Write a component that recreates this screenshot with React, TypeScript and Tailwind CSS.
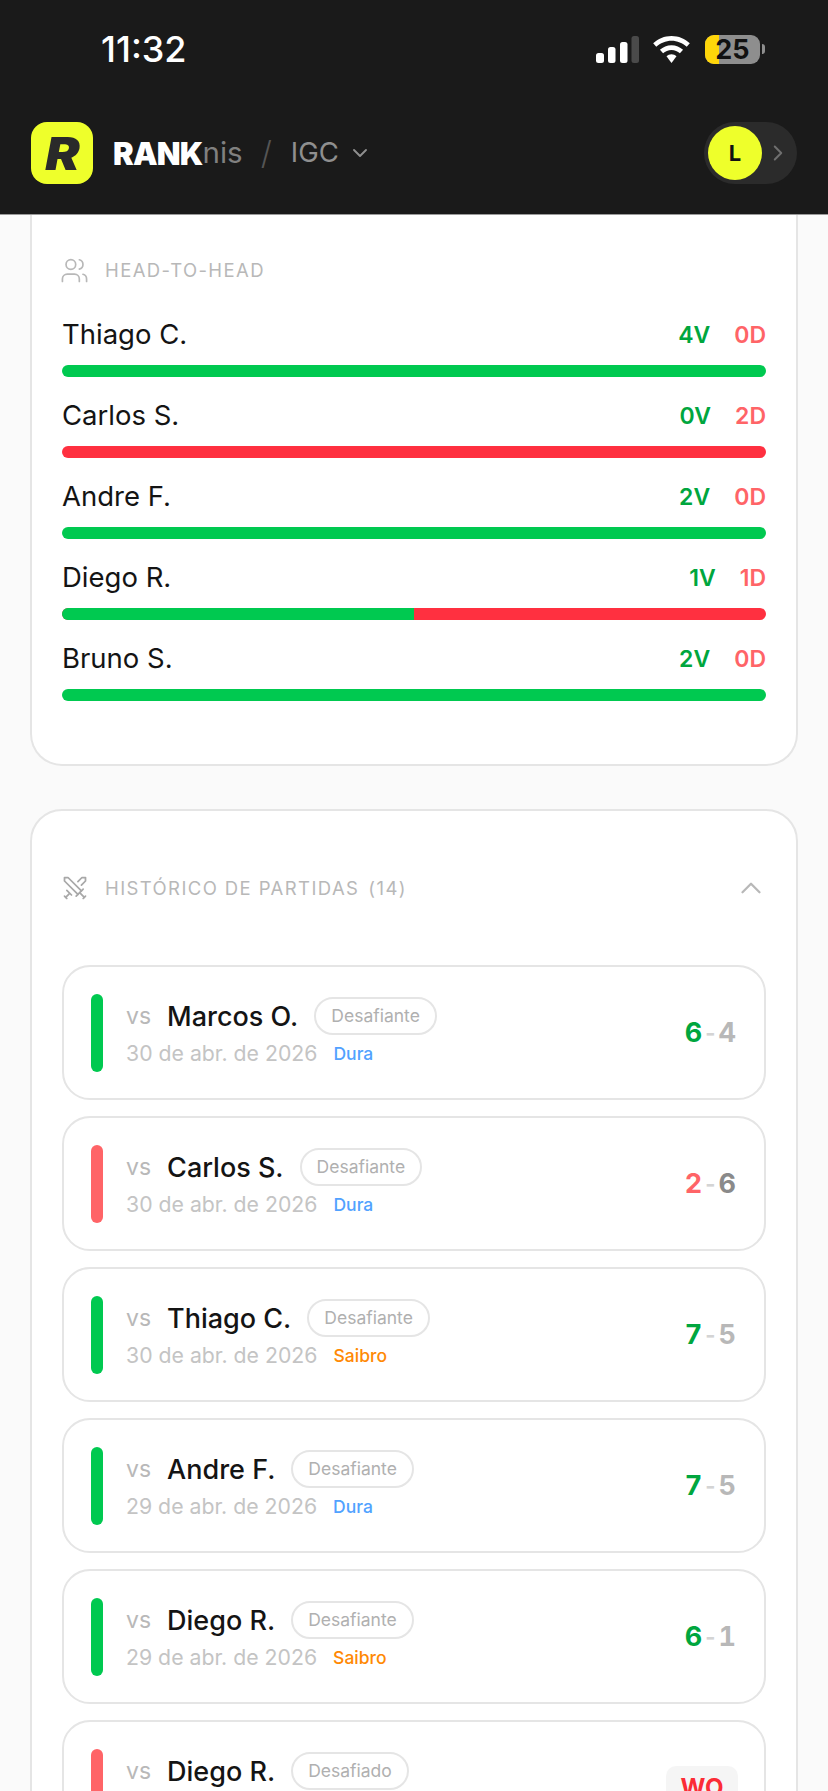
import React from 'react';
import { ChevronDown, ChevronRight, ChevronUp, Swords, Users } from 'lucide-react';

const headToHead = [
  { name: 'Thiago C.', wins: 4, losses: 0 },
  { name: 'Carlos S.', wins: 0, losses: 2 },
  { name: 'Andre F.', wins: 2, losses: 0 },
  { name: 'Diego R.', wins: 1, losses: 1 },
  { name: 'Bruno S.', wins: 2, losses: 0 },
];

type Match = {
  name: string;
  role: string;
  date: string;
  surface: 'Dura' | 'Saibro';
  won: boolean;
  score?: [number, number];
};

const matches: Match[] = [
  { name: 'Marcos O.', role: 'Desafiante', date: '30 de abr. de 2026', surface: 'Dura', won: true, score: [6, 4] },
  { name: 'Carlos S.', role: 'Desafiante', date: '30 de abr. de 2026', surface: 'Dura', won: false, score: [2, 6] },
  { name: 'Thiago C.', role: 'Desafiante', date: '30 de abr. de 2026', surface: 'Saibro', won: true, score: [7, 5] },
  { name: 'Andre F.', role: 'Desafiante', date: '29 de abr. de 2026', surface: 'Dura', won: true, score: [7, 5] },
  { name: 'Diego R.', role: 'Desafiante', date: '29 de abr. de 2026', surface: 'Saibro', won: true, score: [6, 1] },
  { name: 'Diego R.', role: 'Desafiado', date: '29 de abr. de 2026', surface: 'Saibro', won: false },
];

const StatusBar: React.FC = () => (
  <div className="flex h-[98px] items-center justify-between pl-[101px] pr-[63px]">
    <span className="text-[36px] font-medium leading-none text-white">11:32</span>
    <div className="flex items-center">
      <svg width="43" height="27" viewBox="0 0 43 27" className="mr-[14px]">
        <rect x="0" y="17" width="8" height="10" rx="2.5" fill="#fff" />
        <rect x="12" y="11" width="7.500" height="16" rx="2.5" fill="#fff" />
        <rect x="24" y="6" width="7.500" height="21" rx="2.5" fill="#fff" />
        <rect x="35.500" y="0" width="7.500" height="27" rx="2.5" fill="#4a4a4a" />
      </svg>
      <svg width="37" height="27" viewBox="0 0 38 28" className="mr-[15px]">
        <path d="M19 0C11.6 0 5 2.9 0 7.6l3.2 3.6C7.4 7.3 13 4.8 19 4.8s11.6 2.5 15.8 6.4L38 7.6C33 2.9 26.400 0 19 0z" fill="#fff" />
        <path d="M19 9.500c-4.600 0-8.800 1.800-12 4.800l3.300 3.600c2.300-2.100 5.300-3.500 8.700-3.500s6.400 1.400 8.700 3.500l3.300-3.600c-3.200-3-7.400-4.800-12-4.800z" fill="#fff" />
        <path d="M19 19c-2 0-3.800.8-5.200 2L19 28l5.200-7c-1.400-1.200-3.200-2-5.200-2z" fill="#fff" />
      </svg>
      <div className="relative flex h-[29px] w-[55px] items-center justify-center rounded-[9px] bg-[#8e8e8e]">
        <div className="absolute inset-y-0 left-0 w-[14px] rounded-l-[9px] bg-[#ffd60a]" />
        <span className="relative text-[27px] font-bold leading-none text-[#111111]">25</span>
      </div>
      <div className="ml-[2px] h-[10px] w-[3px] rounded-r-full bg-[#8e8e8e]" />
    </div>
  </div>
);

const AppHeader: React.FC = () => (
  <div className="flex h-[62px] items-center justify-between pl-[31px] pr-[31px]">
    <div className="flex items-center">
      <div className="flex h-[62px] w-[62px] items-center justify-center rounded-[16px] bg-[#eeff2b]">
        <span className="scale-x-[1.12] text-[46px] font-black italic leading-none text-[#2a2a2a]">R</span>
      </div>
      <span className="ml-[20px] text-[31px] font-black leading-none tracking-[-0.8px] text-white">RANK</span>
      <span className="text-[29.500px] font-normal leading-none text-[#808080]">nis</span>
      <span className="ml-[18px] text-[32px] font-light leading-none text-[#555555]">/</span>
      <span className="ml-[19px] text-[27.500px] font-normal leading-none text-[#8f8f8f]">IGC</span>
      <ChevronDown size={24} strokeWidth={1.9} className="ml-[9px] text-[#8f8f8f]" />
    </div>
    <div className="flex h-[62px] w-[93px] items-center rounded-full bg-[#2b2b2b] pl-[4px]">
      <div className="flex h-[54px] w-[54px] items-center justify-center rounded-full bg-[#eeff2b]">
        <span className="text-[22px] font-bold leading-none text-[#111111]">L</span>
      </div>
      <ChevronRight size={26} strokeWidth={1.8} className="ml-[3px] text-[#6f6f6f]" />
    </div>
  </div>
);

const HeadToHeadRow: React.FC<{ name: string; wins: number; losses: number }> = ({ name, wins, losses }) => (
  <div className="mb-[17px]">
    <div className="flex h-[40px] items-center justify-between pt-[4px]">
      <span className="text-[27.500px] font-normal leading-none text-[#141414]">{name}</span>
      <div className="flex items-center gap-[24px] text-[23px] font-semibold leading-none">
        <span className="text-[#00a63e]">{wins}V</span>
        <span className="text-[#ff6467]">{losses}D</span>
      </div>
    </div>
    <div className="mt-[12px] flex h-[12px] overflow-hidden rounded-full bg-[#ff3040]">
      <div className="bg-[#00c950]" style={{ width: `${(wins / (wins + losses)) * 100}%` }} />
    </div>
  </div>
);

const MatchCard: React.FC<{ match: Match }> = ({ match }) => (
  <div className="flex h-[135px] shrink-0 items-center rounded-[28px] border-2 border-[#e5e5e5] bg-white pl-[27px] pr-[28px]">
    <div className={`h-[78px] w-[12px] rounded-full ${match.won ? 'bg-[#00c950]' : 'bg-[#ff6467]'}`} />
    <div className="ml-[23px] mt-[2px] flex-1">
      <div className="flex h-[38px] items-center">
        <span className="text-[23px] leading-none text-[#b8b8b8]">vs</span>
        <span className="ml-[16px] text-[27px] font-medium leading-none text-[#141414]">{match.name}</span>
        <span className="ml-[16px] flex h-[38px] items-center rounded-full border-2 border-[#e5e5e5] px-[15px] text-[17.500px] leading-none text-[#b0b0b0]">
          {match.role}
        </span>
      </div>
      <div className="mt-[3px] flex h-[32px] items-center">
        <span className="text-[21.250px] leading-none text-[#c4c4c4]">{match.date}</span>
        <span className={`ml-[16px] text-[17.500px] font-medium leading-none ${match.surface === 'Dura' ? 'text-[#51a2ff]' : 'text-[#ff8904]'}`}>
          {match.surface}
        </span>
      </div>
    </div>
    {match.score ? (
      <div className="flex items-center text-[27px] font-bold tabular-nums leading-none">
        <span className={match.won ? 'text-[#00a63e]' : 'text-[#ff6467]'}>{match.score[0]}</span>
        <span className="mx-[1px] text-[22px] text-[#d4d4d4]">-</span>
        <span className={match.won ? 'text-[#b8b8b8]' : 'text-[#8a8a8a]'}>{match.score[1]}</span>
      </div>
    ) : (
      <div className="-mr-[2px] flex h-[44px] w-[72px] items-center justify-center rounded-[10px] bg-[#f5f5f5] text-[24px] font-bold leading-none text-[#fb2c36]">
        WO
      </div>
    )}
  </div>
);

export default function App() {
  return (
    <div className="flex h-[1791px] flex-col overflow-hidden bg-[#fafafa] font-['Inter',sans-serif]">
      <header className="h-[215px] shrink-0 border-b border-[#9a9a9a] bg-[#1a1a1a]">
        <StatusBar />
        <div className="mt-[24px]">
          <AppHeader />
        </div>
      </header>

      <div className="flex flex-col gap-[43px] px-[30px]">
        <section className="rounded-b-[32px] border-2 border-t-0 border-[#e5e5e5] bg-white px-[30px] pb-[46px] pt-[40px]">
          <div className="mb-[28px] flex h-[30px] items-center">
            <Users size={29} strokeWidth={1.4} className="-ml-[2px] text-[#b8b8b8]" />
            <span className="ml-[16px] text-[18.500px] font-normal uppercase leading-none tracking-[1.4px] text-[#b8b8b8]">Head-to-head</span>
          </div>
          {headToHead.map((row) => (
            <HeadToHeadRow key={row.name} {...row} />
          ))}
        </section>

        <section className="rounded-[32px] border-2 border-[#e5e5e5] bg-white px-[30px]">
          <div className="flex h-[154px] items-center justify-between">
            <div className="flex items-center">
              <Swords size={28} strokeWidth={1.5} className="-ml-[1px] text-[#a8a8a8]" />
              <span className="ml-[16px] text-[18.500px] font-normal uppercase leading-none tracking-[1.4px] text-[#b8b8b8]">Histórico de partidas</span>
              <span className="ml-[9px] text-[18.500px] font-normal leading-none tracking-[1.4px] text-[#b8b8b8]">(14)</span>
            </div>
            <ChevronUp size={34} strokeWidth={1.6} className="-mr-[2px] text-[#b8b8b8]" />
          </div>
          <div className="flex flex-col gap-[16px]">
            {matches.map((match, i) => (
              <MatchCard key={i} match={match} />
            ))}
          </div>
        </section>
      </div>
    </div>
  );
}
